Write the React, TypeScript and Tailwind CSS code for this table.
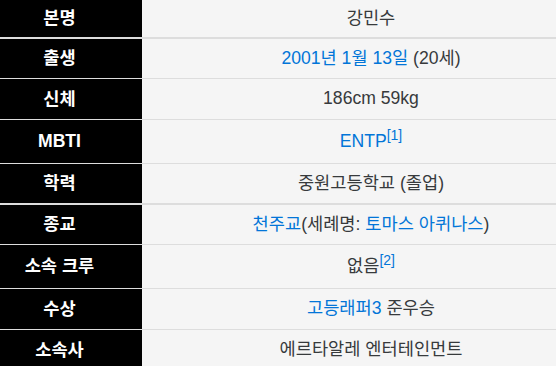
import React from "react";

const B = ({ children }: { children: React.ReactNode }) => (
  <span className="text-[#0275d8]">{children}</span>
);

const Sup = ({ children }: { children: React.ReactNode }) => (
  <sup className="text-[14px] text-[#0275d8] top-[-0.5em]">{children}</sup>
);

type Row = { label: string; value: React.ReactNode; h: string; border: string };

const rows: Row[] = [
  { label: "본명", value: <>강민수</>, h: "h-[37px]", border: "border-b-2" },
  {
    label: "출생",
    value: (
      <>
        <B>2001년 1월 13일</B> (20세)
      </>
    ),
    h: "h-[39px]",
    border: "border-b",
  },
  { label: "신체", value: <>186cm 59kg</>, h: "h-[40px]", border: "border-b" },
  {
    label: "MBTI",
    value: (
      <>
        <B>ENTP</B>
        <Sup>[1]</Sup>
      </>
    ),
    h: "h-[43px]",
    border: "border-b",
  },
  { label: "학력", value: <>중원고등학교 (졸업)</>, h: "h-[39px]", border: "border-b-2" },
  {
    label: "종교",
    value: (
      <>
        <B>천주교</B>(세례명: <B>토마스 아퀴나스</B>)
      </>
    ),
    h: "h-[39px]",
    border: "border-b",
  },
  {
    label: "소속 크루",
    value: (
      <>
        없음<Sup>[2]</Sup>
      </>
    ),
    h: "h-[43px]",
    border: "border-b",
  },
  {
    label: "수상",
    value: (
      <>
        <B>고등래퍼3</B> 준우승
      </>
    ),
    h: "h-[40px]",
    border: "border-b",
  },
  { label: "소속사", value: <>에르타알레 엔터테인먼트</>, h: "h-[40px]", border: "border-b" },
];

export default function App() {
  return (
    <div
      className="w-[556px] h-[366px] overflow-hidden bg-[#f5f5f5]"
      style={{ fontFamily: '"Liberation Sans", "Noto Sans CJK KR", sans-serif' }}
    >
      <div className="w-[600px] flex flex-col">
        {rows.map((r, i) => (
          <div key={i} className={`flex ${r.h} ${r.border} border-[#dddddd] box-content`}>
            <div className="w-[142px] shrink-0 bg-black text-white font-bold text-[17.6px] flex items-center justify-center pr-[23px]">
              {r.label}
            </div>
            <div className="flex-1 bg-[#f5f5f5] text-[#373a3c] text-[17.6px] flex items-center justify-center leading-none">
              <span>{r.value}</span>
            </div>
          </div>
        ))}
      </div>
    </div>
  );
}
